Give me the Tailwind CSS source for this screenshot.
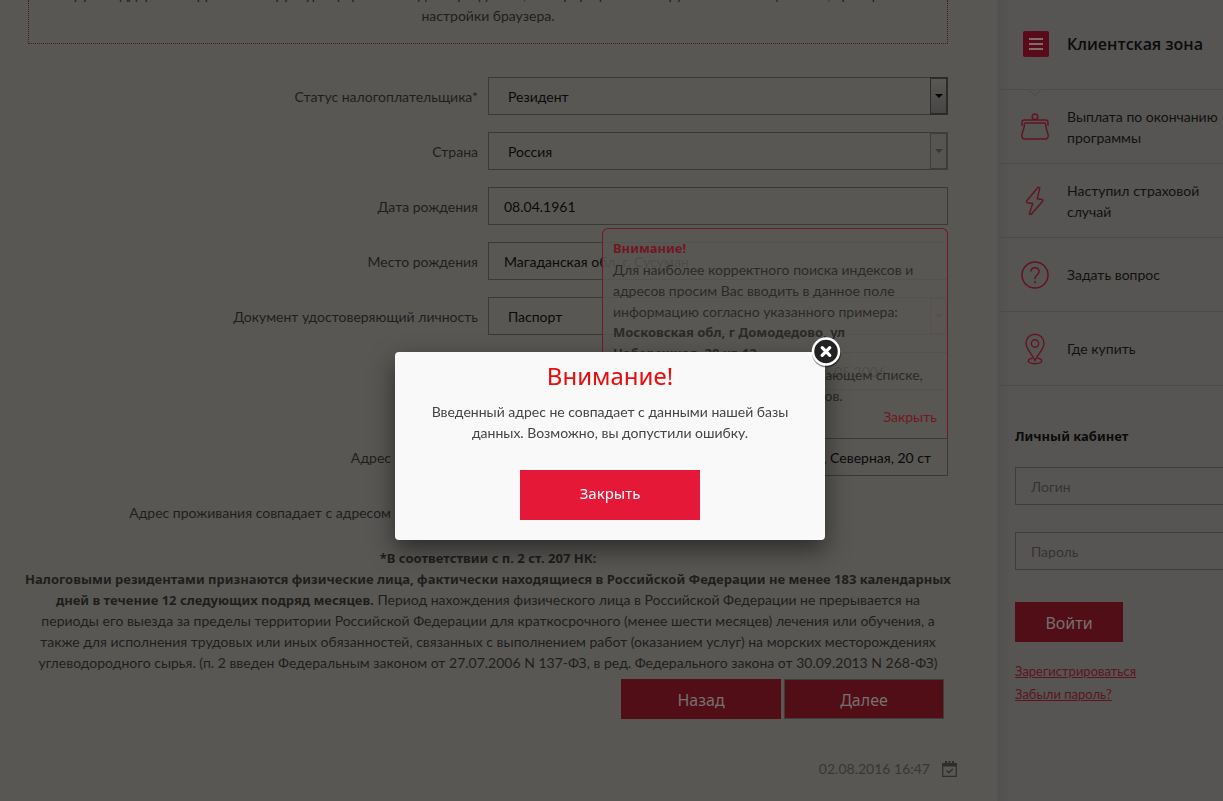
<!DOCTYPE html>
<html lang="ru">
<head>
<meta charset="utf-8">
<meta name="viewport" content="width=device-width, initial-scale=1">
<title>Клиентская зона</title>
<script src="https://cdn.jsdelivr.net/npm/@tailwindcss/browser@4"></script>
</head>
<body class="min-h-screen overflow-hidden bg-[#595754] font-['Lato',sans-serif] text-sm leading-[21px] text-[#1f1e1d]">
<div class="flex min-h-screen">
  <main class="w-[997px] shrink-0 pb-5">
    <div class="ml-7 flex h-11 w-[920px] flex-col justify-end overflow-hidden border border-t-0 border-dotted border-[#4a1a20] pb-[17px] text-center">
      <p class="whitespace-nowrap">Для поддержки корректной структуры форм необходимо убедиться, что браузер не блокирует всплывающие окна, проверить</p>
      <p>настройки браузера.</p>
    </div>

    <form class="relative mt-[33px] flex w-[948px] flex-col gap-[17px]">
      <div class="flex items-center justify-end gap-2.5">
        <label for="status">Статус налогоплательщика*</label>
        <div class="relative w-[460px]">
          <select id="status" class="block h-[38px] w-full appearance-none border border-[#3b3938] pl-[19px] text-[#0a0a0a]"><option>Резидент</option></select>
          <span class="pointer-events-none absolute inset-y-0 right-0 flex w-[18px] items-center justify-center border-2 border-l border-[#2c2b2a] bg-linear-to-b from-[#5a5855] to-[#484644]"><svg class="h-1 w-2" viewBox="0 0 8 4"><path d="M0 0h8L4 4z" fill="#050505"/></svg></span>
        </div>
      </div>
      <div class="flex items-center justify-end gap-2.5">
        <label for="country">Страна</label>
        <div class="relative w-[460px]">
          <select id="country" class="block h-[38px] w-full appearance-none border border-[#3b3938] pl-[19px] text-[#0a0a0a]"><option>Россия</option></select>
          <span class="pointer-events-none absolute inset-y-0 right-0 flex w-[18px] items-center justify-center border-2 border-l border-[#3f3d3b] bg-[#575552]"><svg class="h-1 w-2" viewBox="0 0 8 4"><path d="M0 0h8L4 4z" fill="#3a3836"/></svg></span>
        </div>
      </div>
      <div class="flex items-center justify-end gap-2.5">
        <label for="birth">Дата рождения</label>
        <input id="birth" value="08.04.1961" class="h-[38px] w-[460px] border border-[#3b3938] px-[15px] text-[#0a0a0a]">
      </div>
      <div class="flex items-center justify-end gap-2.5">
        <label for="place">Место рождения</label>
        <input id="place" value="Магаданская обл, г. Сусуман" class="h-[38px] w-[460px] border border-[#3b3938] px-[15px] text-[#0a0a0a]">
      </div>
      <div class="flex items-center justify-end gap-2.5">
        <label for="doc">Документ удостоверяющий личность</label>
        <div class="relative w-[460px]">
          <select id="doc" class="block h-[38px] w-full appearance-none border border-[#3b3938] pl-[19px] text-[#0a0a0a]"><option>Паспорт</option></select>
          <span class="pointer-events-none absolute inset-y-0 right-0 flex w-[18px] items-center justify-center border-2 border-l border-[#3f3d3b] bg-[#575552]"><svg class="h-1 w-2" viewBox="0 0 8 4"><path d="M0 0h8L4 4z" fill="#3a3836"/></svg></span>
        </div>
      </div>
      <div class="flex items-center justify-end gap-2.5">
        <input aria-label="Дата выдачи" value="06.05.2006" class="h-[38px] w-[460px] border border-[#3b3938] pr-[61px] text-right text-[#0a0a0a]">
      </div>
      <div class="mt-[31px] flex items-center gap-2.5">
        <label for="address" class="w-[391px] text-right">Адрес</label>
        <input id="address" value="Магаданская обл, г Сусуман, Северная, 20 ст" class="h-[38px] min-w-0 grow border border-[#3b3938] pr-4 text-right text-[#0a0a0a]">
      </div>
      <div class="flex h-[38px] items-center gap-2.5">
        <label for="same" class="w-[391px] text-right">Адрес проживания совпадает с адресом</label>
        <input id="same" type="checkbox" checked>
      </div>

      <!-- Подсказка поверх полей -->
      <div class="absolute top-[151px] right-0 flex h-[210px] w-[346px] flex-col rounded-t-md border border-b-0 border-[#6f1a26] bg-[#595754]/85 px-2.5 pt-[9px] whitespace-nowrap text-[#2b2a29]">
        <strong class="font-['Noto_Sans',sans-serif] text-[13px] font-bold text-[#701722]">Внимание!</strong>
        <p>Для наиболее корректного поиска индексов и</p>
        <p>адресов просим Вас вводить в данное поле</p>
        <p>информацию согласно указанного примера:</p>
        <p class="font-['Noto_Sans',sans-serif] text-[13px] font-bold">Московская обл, г Домодедово, ул</p>
        <p class="font-['Noto_Sans',sans-serif] text-[13px] font-bold">Набережная, 28 кв 12</p>
        <p>При отсутствии адресов в выпадающем списке,</p>
        <p>выберите свой адрес без индексов.</p>
        <button type="button" class="self-end text-[#701722]">Закрыть</button>
      </div>
    </form>

    <div class="mt-[17px] ml-7 w-[920px] text-center">
      <div class="-mx-4 whitespace-nowrap">
        <p class="font-['Noto_Sans',sans-serif] text-[13px] font-bold">*В соответствии с п. 2 ст. 207 НК:</p>
        <p class="font-['Noto_Sans',sans-serif] text-[13px] font-bold">Налоговыми резидентами признаются физические лица, фактически находящиеся в Российской Федерации не менее 183 календарных</p>
        <div class="-mt-px">
          <p><strong class="font-['Noto_Sans',sans-serif] text-[13px] leading-none font-bold">дней в течение 12 следующих подряд месяцев.</strong> Период нахождения физического лица в Российской Федерации не прерывается на</p>
          <p>периоды его выезда за пределы территории Российской Федерации для краткосрочного (менее шести месяцев) лечения или обучения, а</p>
          <p>также для исполнения трудовых или иных обязанностей, связанных с выполнением работ (оказанием услуг) на морских месторождениях</p>
          <p>углеводородного сырья. (п. 2 введен Федеральным законом от 27.07.2006 N 137-ФЗ, в ред. Федерального закона от 30.09.2013 N 268-ФЗ)</p>
        </div>
      </div>
    </div>

    <div class="mt-1.5 flex w-[944px] justify-end gap-[3px] font-['Noto_Sans',sans-serif]">
      <button type="button" class="h-10 w-40 bg-[#520e17] pt-0.5 text-base text-[#76706f]">Назад</button>
      <button type="button" class="h-10 w-40 border border-[#3f3d3c] bg-[#520e17] pt-0.5 text-base text-[#76706f]">Далее</button>
    </div>

    <div class="mt-[39px] flex w-[957px] items-center justify-end gap-3 text-[#383634]">
      <time datetime="2016-08-02T16:47">02.08.2016 16:47</time>
      <svg class="h-4 w-[15px]" viewBox="0 0 15 16" fill="none" stroke="#302e2c"><path d="M.7 2.500h13.600v12.800H.7z" stroke-width="1.200"/><path d="M.5 2h14v3.500H.5z" fill="#302e2c" stroke="none"/><path d="M4 0v3.500M7.500 0v3.500M11 0v3.500" stroke-width="2"/><path d="M4.500 9.500l2.300 2.300 4-4" stroke-width="1.300"/></svg>
    </div>
  </main>

  <aside class="flex min-w-0 flex-1 border-l-2 border-[#545251] bg-[#575553]">
    <div class="w-3 shrink-0 bg-linear-to-r from-[#525050] to-[#575553]"></div>
    <div class="min-w-0 flex-1">
      <header class="relative -ml-3 flex h-[90px] items-center gap-[18px] border-b border-[#4d4b4a] pb-0.5 pl-6">
        <button type="button" aria-label="Меню" class="flex size-[26px] shrink-0 flex-col items-center justify-center gap-[3px] rounded-xs bg-[#590b1b]"><span class="h-0.5 w-3.5 bg-[#7d6d6b]"></span><span class="h-0.5 w-3.5 bg-[#7d6d6b]"></span><span class="h-0.5 w-3.5 bg-[#7d6d6b]"></span></button>
        <h2 class="font-['Open_Sans',sans-serif] text-base font-semibold whitespace-nowrap text-[#0b0b0b]">Клиентская зона</h2>
        <svg class="absolute top-[88px] left-[28px] h-2 w-4" viewBox="0 0 16 8" fill="#575553" stroke="#4d4b4a"><path d="M0 1.500h1l7 6 7-6h1"/></svg>
      </header>
      <nav class="-ml-3 whitespace-nowrap text-[#111110]">
        <a href="#" class="flex h-[74px] items-center gap-[18px] border-b border-[#4d4b4a] pl-[22px]">
          <svg class="h-7 w-7 shrink-0" viewBox="0 0 28 28" fill="none" stroke="#601522" stroke-width="1.500"><circle cx="14" cy="3.800" r="2.800"/><path d="M1 13V9.500Q1 7 3.500 7h21Q27 7 27 9.500V13M3.500 10h21M3.500 10c.2 6-2.700 9.500-2.700 12.500 0 2.500 1.200 3.500 3 3.500h20.400c1.800 0 3-1 3-3.500 0-3-2.900-6.500-2.700-12.500"/></svg>
          <span>Выплата по окончанию<br>программы</span>
        </a>
        <a href="#" class="flex h-[74px] items-center gap-[18px] border-b border-[#4d4b4a] pl-[22px]">
          <svg class="h-[30px] w-7 shrink-0" viewBox="0 0 28 30" fill="none" stroke="#601522" stroke-width="1.400" stroke-linejoin="round"><path d="M17 1.200 5.500 15.200Q5 16.500 6.500 16.800l5.200.7L8.300 28l2 .3L21.800 15q.6-1.200-1-1.500l-4.500-.8L18.800 2z"/></svg>
          <span>Наступил страховой<br>случай</span>
        </a>
        <a href="#" class="flex h-[74px] items-center gap-[18px] border-b border-[#4d4b4a] pl-[22px]">
          <svg class="h-7 w-7 shrink-0" viewBox="0 0 28 28" fill="none" stroke="#601522" stroke-width="1.500"><circle cx="14" cy="14" r="13"/><path d="M10 10.500c0-5 8.200-5 8.200-.3 0 3.600-4.200 3.600-4.200 7.800M14 20v2.200"/></svg>
          <span>Задать вопрос</span>
        </a>
        <a href="#" class="flex h-[74px] items-center gap-[18px] border-b border-[#4d4b4a] pl-[22px]">
          <svg class="h-8 w-7 shrink-0" viewBox="0 0 28 32" fill="none" stroke="#601522" stroke-width="1.400"><path d="M14 27.500C11 21 5 16 5 10.200a9 9 0 0 1 18 0C23 16 17 21 14 27.500z"/><circle cx="14" cy="10.500" r="3.700"/><path d="M11.500 25.300c-6 .5-6 5.400 2.500 5.400s8.500-4.900 2.500-5.400"/></svg>
          <span>Где купить</span>
        </a>
      </nav>
      <form class="mt-10 ml-1 flex flex-col items-start">
        <h3 class="font-['Noto_Sans',sans-serif] text-[13px] font-bold text-[#0b0b0b]">Личный кабинет</h3>
        <input aria-label="Логин" placeholder="Логин" class="mt-5 h-[38px] w-full border border-r-0 border-[#3f3d3c] px-[15px] placeholder:text-[#353332]">
        <input type="password" aria-label="Пароль" placeholder="Пароль" class="mt-[27px] h-[38px] w-full border border-r-0 border-[#3f3d3c] px-[15px] placeholder:text-[#353332]">
        <button type="button" class="mt-8 h-10 w-[108px] bg-[#520e17] pt-0.5 font-['Noto_Sans',sans-serif] text-base text-[#76706f]">Войти</button>
        <a href="#" class="mt-[18px] text-[13px] leading-[23px] text-[#5c1420] underline">Зарегистрироваться</a>
        <a href="#" class="text-[13px] leading-[23px] text-[#5c1420] underline">Забыли пароль?</a>
      </form>
    </div>
  </aside>
</div>

<!-- Модальное окно -->
<div class="fixed inset-0 flex items-start justify-center pt-[352px] pr-[3px]">
  <section role="dialog" aria-modal="true" aria-labelledby="dlg-title" class="relative flex w-[430px] flex-col items-center rounded bg-[#f9f9f9] px-5 pb-5 text-center text-[#444] shadow-[0_10px_25px_rgba(0,0,0,0.5)]">
    <h1 id="dlg-title" class="mt-2 font-['Noto_Sans',sans-serif] text-2xl leading-8 text-[#e80c0c]">Внимание!</h1>
    <p class="mt-[9px] whitespace-nowrap">Введенный адрес не совпадает с данными нашей базы<br>данных. Возможно, вы допустили ошибку.</p>
    <button type="button" class="mt-[27px] h-[50px] w-[180px] bg-[#e51937] pb-1 font-['Noto_Sans',sans-serif] text-[15px] text-white">Закрыть</button>
    <button type="button" aria-label="Закрыть окно" class="absolute -top-4 -right-[17px] size-8">
      <svg class="size-8" viewBox="0 0 32 32"><circle cx="16.500" cy="17" r="14.500" fill="#000" opacity=".4"/><circle cx="16" cy="15.500" r="13" fill="#222" stroke="#fff" stroke-width="2.500"/><path d="m12.200 11.700 7.600 7.600m0-7.600-7.600 7.600" stroke="#fff" stroke-width="3.200" stroke-linecap="round"/></svg>
    </button>
  </section>
</div>
</body>
</html>
